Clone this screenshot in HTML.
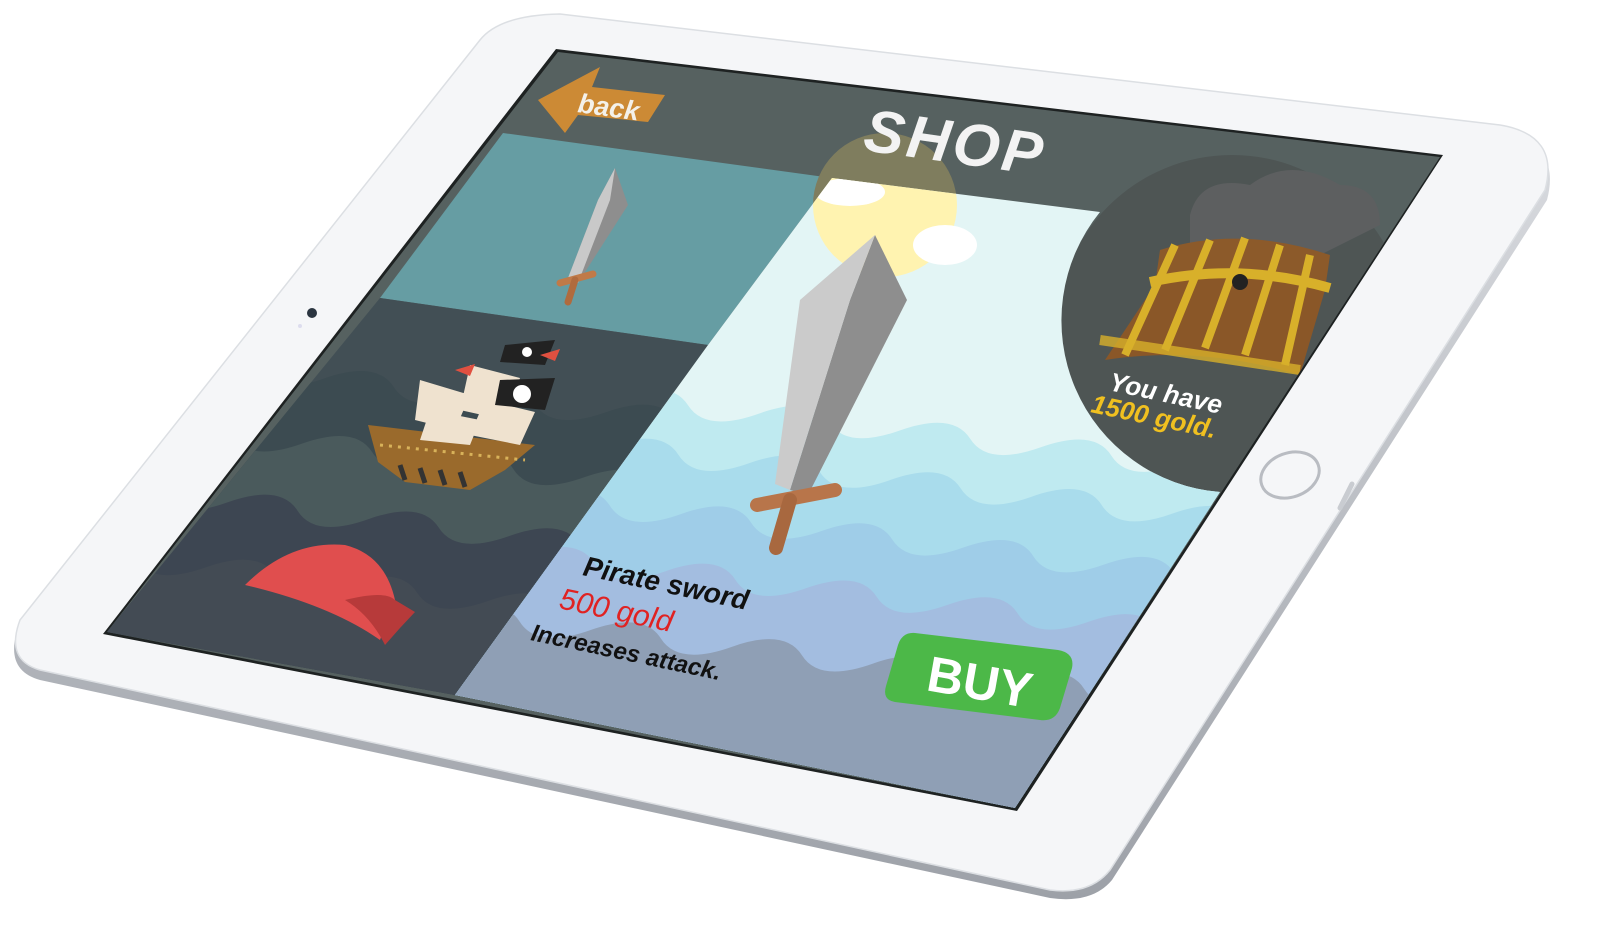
<!DOCTYPE html>
<html><head><meta charset="utf-8"><style>
html,body{margin:0;padding:0;background:#fff;width:1597px;height:925px;overflow:hidden;}
svg{display:block;position:absolute;left:0;top:0;}
text{font-family:"Liberation Sans",sans-serif;}
</style></head><body>
<svg width="1597" height="925" viewBox="0 0 1597 925" xmlns="http://www.w3.org/2000/svg" overflow="hidden">
<defs>
<linearGradient id="edge" x1="0" y1="0" x2="0" y2="1">
<stop offset="0" stop-color="#e2e4e8"/><stop offset="1" stop-color="#9da1a8"/></linearGradient>
<clipPath id="scr"><path d="M558,52 L1440,157 L1015,808 L107,632 Z"/></clipPath>
<clipPath id="light"><path d="M832,178 L1100,212 A172 172 0 0 0 1220,492 L1015,808 L455,695 L708,345 Z"/></clipPath>
<clipPath id="sea"><path d="M380,298 L708,345 L455,695 L107,632 Z"/></clipPath>
<path id="wv" d="M-300,0 q40,-30 80,0 t80,0 t80,0 t80,0 t80,0 t80,0 t80,0 t80,0 t80,0 t80,0 t80,0 t80,0 t80,0 t80,0 t80,0 t80,0 t80,0 t80,0 t80,0 t80,0 V600 H-300Z"/>
</defs>
<path d="M560,22 L1500,133 Q1562,143 1547,200 L1112,880 Q1092,904 1050,898 L40,680 Q4,670 18,628 L480,48 Q500,22 560,22 Z" fill="url(#edge)"/>
<path d="M560,14 L1500,125 Q1560,135 1545,190 L1110,870 Q1090,895 1050,890 L40,670 Q5,660 20,620 L480,40 Q500,15 560,14 Z" fill="#f5f6f8" stroke="#dcdfe3" stroke-width="1.5"/>
<circle cx="312" cy="313" r="5" fill="#2b3540"/>
<circle cx="300" cy="326" r="2" fill="#dde"/>
<ellipse cx="1290" cy="475" rx="30" ry="22" fill="none" stroke="#b9bcc2" stroke-width="3" transform="rotate(-20 1290 475)"/>
<path d="M1352,484 L1340,508" stroke="#c9ccd1" stroke-width="5" stroke-linecap="round"/>
<path d="M556,49 L1443,155 L1017,811 L103,634 Z" fill="#1e2222"/>
<g clip-path="url(#scr)">
<rect x="0" y="0" width="1597" height="925" fill="#566160"/>
<circle cx="1232" cy="330" r="175" fill="#4e5554"/>
<path d="M1190,215 q10,-40 60,-30 q40,-30 90,0 q40,0 40,40 l-60,30 l-130,-10 z" fill="#5d5f60"/>
<path d="M503,133 L832,178 L708,345 L380,298 Z" fill="#669da3"/>
<circle cx="885" cy="205" r="72" fill="#7f7d5e"/>
<g clip-path="url(#sea)">
<rect x="0" y="250" width="800" height="500" fill="#424f55"/>
<g transform="matrix(0.882,0.105,-0.601,0.773,558,52)">
<use href="#wv" transform="translate(0,420)" fill="#3c4b51"/>
<use href="#wv" transform="translate(30,500)" fill="#4a5a5c"/>
<use href="#wv" transform="translate(0,580)" fill="#3d4652"/>
<use href="#wv" transform="translate(30,660)" fill="#434b54"/>
</g>
</g>
<g clip-path="url(#light)">
<rect x="400" y="150" width="900" height="700" fill="#e3f5f5"/>
<circle cx="885" cy="205" r="72" fill="#fff3b0"/>
<ellipse cx="945" cy="245" rx="32" ry="20" fill="#fff"/>
<ellipse cx="850" cy="192" rx="35" ry="14" fill="#fff"/>
<g transform="matrix(0.882,0.105,-0.601,0.773,558,52)">
<use href="#wv" transform="translate(0,400)" fill="#bfeaf0"/>
<use href="#wv" transform="translate(30,460)" fill="#a9dcec"/>
<use href="#wv" transform="translate(0,530)" fill="#9fcde8"/>
<use href="#wv" transform="translate(30,600)" fill="#a3bde0"/>
<use href="#wv" transform="translate(0,680)" fill="#8f9fb5"/>
</g>
</g>
<path d="M615,168 L628,205 L578,283 L568,278 L598,200 Z" fill="#8e8e8e"/>
<path d="M615,168 L598,200 L568,278 L578,283 L610,200 Z" fill="#c9c9c9"/>
<path d="M560,283 L593,274" stroke="#c07a48" stroke-width="7" stroke-linecap="round"/>
<path d="M575,280 L568,302" stroke="#b06b3e" stroke-width="7" stroke-linecap="round"/>
<path d="M875,235 L907,300 L808,495 L790,490 L850,300 Z" fill="#8e8e8e"/>
<path d="M875,235 L850,300 L790,490 L775,484 L800,300 Z" fill="#cbcbcb"/>
<path d="M757,505 L835,490" stroke="#b8754a" stroke-width="14" stroke-linecap="round"/>
<path d="M790,500 L776,548" stroke="#a8683f" stroke-width="14" stroke-linecap="round"/>
<path d="M368,425 L535,445 L505,470 L470,490 L405,482 L378,462 Z" fill="#9a6a2c"/>
<path d="M380,445 L525,460" stroke="#d8b25a" stroke-width="3" stroke-dasharray="3 6"/>
<path d="M400,465 l5,15 M420,468 l5,15 M440,470 l5,15 M460,472 l5,15" stroke="#333" stroke-width="5"/>
<path d="M420,380 L470,395 L455,430 L415,420 Z M470,365 L520,378 L505,420 L460,410 Z M430,410 L480,420 L470,445 L420,440Z M485,400 L535,412 L520,445 L470,435Z" fill="#efe2cf"/>
<path d="M505,345 L555,340 L545,365 L500,362 Z" fill="#222"/>
<path d="M500,380 L555,378 L545,410 L495,405 Z" fill="#222"/>
<circle cx="522" cy="394" r="9" fill="#fff"/>
<circle cx="527" cy="352" r="5" fill="#fff"/>
<path d="M455,370 l20,-6 l-5,12z M540,355 l20,-6 l-5,12z" fill="#e05040"/>
<path d="M245,585 Q290,540 345,545 Q385,555 395,600 L380,640 Q330,605 245,585 Z" fill="#e04e4e"/>
<path d="M345,600 Q385,590 395,600 L415,612 L400,628 L385,645 Q370,615 345,600 Z" fill="#b73a3a"/>
<path d="M1160,250 Q1240,225 1330,255 L1325,290 Q1240,265 1155,285 Z" fill="#8c5a2a"/>
<path d="M1155,285 Q1240,265 1325,290 L1300,375 Q1200,345 1105,360 Z" fill="#8a5728"/>
<path d="M1175,245 L1125,355 M1210,240 L1165,350 M1245,238 L1205,348 M1280,245 L1245,355 M1310,255 L1285,365" stroke="#d8b02a" stroke-width="8"/>
<path d="M1150,282 Q1240,262 1330,288" stroke="#d8b02a" stroke-width="10" fill="none"/>
<circle cx="1240" cy="282" r="8" fill="#222"/>
<path d="M1100,340 L1300,370" stroke="#d8b02a" stroke-width="10" opacity=".8"/>
<path d="M538,100 L600,67 L592,87 L665,95 L648,122 L578,115 L565,133 Z" fill="#cc8a35"/>
<text x="577" y="112" font-size="27" font-weight="bold" font-style="italic" fill="#f4f1ea" transform="rotate(8 577 112)">back</text>
<text x="862" y="150" font-size="60" font-weight="bold" font-style="italic" fill="#f3f3f3" letter-spacing="3" transform="rotate(8 862 150)">SHOP</text>
<text x="582" y="575" font-size="28" font-weight="bold" font-style="italic" fill="#111" transform="rotate(12 582 575)">Pirate sword</text>
<text x="558" y="608" font-size="30" font-style="italic" fill="#e02222" transform="rotate(12 558 608)">500 gold</text>
<text x="530" y="640" font-size="24" font-weight="bold" font-style="italic" fill="#111" transform="rotate(12 530 640)">Increases attack.</text>
<text x="1108" y="390" font-size="26" font-weight="bold" font-style="italic" fill="#fff" transform="rotate(12 1108 390)">You have</text>
<text x="1090" y="412" font-size="26" font-weight="bold" font-style="italic" fill="#f0c020" transform="rotate(12 1090 412)">1500 gold.</text>
<path d="M915,633 L1058,650 Q1075,653 1072,668 L1060,708 Q1055,722 1040,720 L895,702 Q882,700 886,686 L898,645 Q902,632 915,633 Z" fill="#4cb848"/>
<text x="925" y="690" font-size="50" font-weight="bold" fill="#fff" transform="rotate(10 925 690)">BUY</text>
</g>
</svg>
</body></html>
